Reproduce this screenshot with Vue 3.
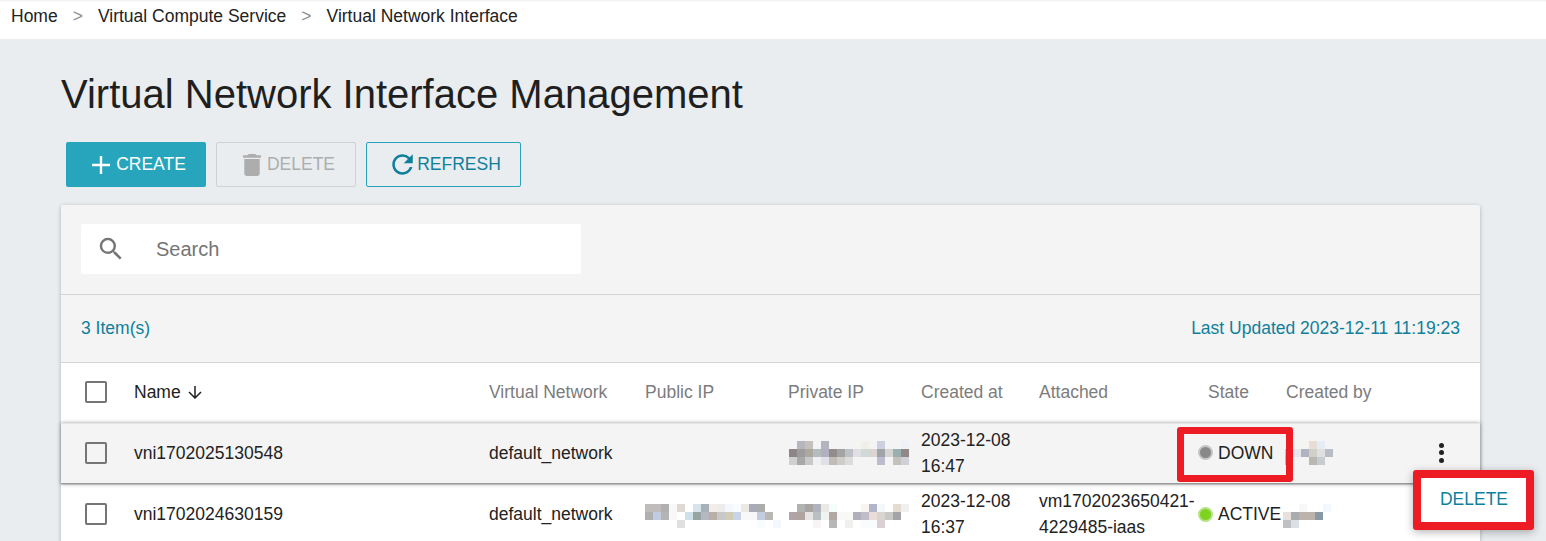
<script setup>
const headers = [
  { label: 'Virtual Network' },
  { label: 'Public IP' },
  { label: 'Private IP' },
  { label: 'Created at' },
  { label: 'Attached' },
  { label: 'State', cls: 'state-head' },
  { label: 'Created by' },
]
const blurs = {
  priv1: [
    '- b6b6be c4c0bc - b4b4c0 - - - - f2efe8 - ccd0e0 - - eef2f6',
    '8f8587 9c9c9c aca8a0 b4bcc0 b0b0c0 948c8c a4a4a4 c0c0c8 e0e0e4 d0d8d8 dcd4d0 a0a4a8 d4d4d0 9ab0b0 908888',
    'd0d0d0 a8a8a8 c8c8c8 eef0f2 e0e0e8 c0bcb8 d0ccc8 dcdcdc - - - bcbccc - c4c0bc d0d0d8',
  ],
  pub2: [
    'c0bcbc c0bcbc b0b0b0 f8f8f8 e0d8d4 - d8e4ec a8b0b8 f4ece8 ececec f4f8fc f8fcfc ece8e4 a8acb8 acaca8 - -',
    'b0b0b0 c0cce0 b4b4b4 f8f8f8 - d0e0e8 98a4a0 b4b8c0 b8b0a8 c8c8c8 d0ccb8 c8d4e8 f8f8f8 f8f8f8 c4cce0 b8b8b4 -',
    '- - - - e0e0e0 - - - - - - - - - f8fcfc - f4f8fc',
  ],
  priv2: [
    '- b0b4b0 a8a4a0 b0b4bc ece8e4 f4fcfc - - - f8f4f0 b4b4c8 f4f8fc - e4dcd0 f0f0f0',
    'b0a4a8 b0a4a0 e8e4e4 b8c0c4 f0f4f0 b0a8a4 f8f8f8 f8f8f4 b0b0bc c0bcc8 eadcd8 d8d4d0 c8c8c4 a4a4a8 -',
    '- - - f8f4f4 - b8b8b8 - f0f0ec - f8fcfc f8fcfc d8d0d4 - - -',
  ],
  user1: [
    '- - - e8dcd8 e4ecf4 -',
    'c0c0c8 e8e8ec b0b4c0 d0d0c8 e0e0e0 b8bcc4',
    'b8b8bc - - b8b8b0 c8ccd0 -',
  ],
  user2: [
    '- - f8f8f8 - - f4f8fc',
    'e8e0dc a8acac bcb4ac bcb4ac 8898a4 -',
    'c0c0c4 dce0e4 - - - -',
  ],
}
const cells = (key) =>
  blurs[key].map((r) => r.split(' ').map((c) => (c === '-' ? 'transparent' : '#' + c)))
const rows = [
  { name: 'vni1702025130548', net: 'default_network', pub: null, priv: 'priv1', date: '2023-12-08', time: '16:47', attached: [], state: 'DOWN', user: 'user1', hover: true },
  { name: 'vni1702024630159', net: 'default_network', pub: 'pub2', priv: 'priv2', date: '2023-12-08', time: '16:37', attached: ['vm1702023650421-', '4229485-iaas'], state: 'ACTIVE', user: 'user2', hover: false },
]
</script>

<template>
  <div class="page">
    <nav class="crumbs">
      <span>Home</span><span class="sep">&gt;</span>
      <span>Virtual Compute Service</span><span class="sep">&gt;</span>
      <span>Virtual Network Interface</span>
    </nav>
    <main class="content">
      <h1 class="title">Virtual Network Interface Management</h1>
      <div class="actions">
        <button class="btn primary">
          <svg class="ic-plus" width="18" height="18" viewBox="0 0 18 18"><path d="M9 0v18M0 9h18" stroke="#fff" stroke-width="2.400" fill="none"/></svg>
          CREATE
        </button>
        <button class="btn disabled">
          <svg class="ic-trash" width="18" height="22" viewBox="5 3 14 18" preserveAspectRatio="none"><path fill="#adadad" d="M6 19c0 1.100.9 2 2 2h8c1.100 0 2-.9 2-2V7H6v12zM19 4h-3.500l-1-1h-5l-1 1H5v2h14V4z"/></svg>
          DELETE
        </button>
        <button class="btn outline">
          <svg class="ic-refresh" width="21" height="21" viewBox="3.800 3.800 16.400 16.400"><path fill="#0f7f9c" d="M17.650 6.350A7.958 7.958 0 0 0 12 4c-4.420 0-7.990 3.580-7.990 8s3.570 8 7.990 8c3.730 0 6.840-2.550 7.730-6h-2.080A5.990 5.990 0 0 1 12 18c-3.310 0-6-2.690-6-6s2.690-6 6-6c1.660 0 3.140.69 4.220 1.780L13 11h7V4l-2.350 2.350z"/></svg>
          REFRESH
        </button>
      </div>
      <section class="card">
        <div class="search-bar">
          <div class="search">
            <svg class="search-icon" width="30" height="30" viewBox="0 0 24 24"><path fill="#757575" d="M15.500 14h-.79l-.28-.27A6.471 6.471 0 0 0 16 9.500 6.500 6.500 0 1 0 9.500 16c1.610 0 3.090-.59 4.230-1.570l.27.28v.79l5 4.990L20.490 19l-4.990-5zm-6 0C7.010 14 5 11.990 5 9.500S7.010 5 9.500 5 14 7.010 14 9.500 11.990 14 9.500 14z"/></svg>
            <span class="placeholder">Search</span>
          </div>
        </div>
        <div class="summary">
          <span>3 Item(s)</span>
          <span>Last Updated 2023-12-11 11:19:23</span>
        </div>
        <div class="row head">
          <div class="check-cell"><span class="check"></span></div>
          <div class="name-head">Name
            <svg width="14" height="13" viewBox="0 0 14 13"><path d="M7 0v12M1 6l6 6 6-6" stroke="#222" stroke-width="1.500" fill="none"/></svg>
          </div>
          <div v-for="h in headers" :key="h.label" :class="['head-cell', h.cls]">{{ h.label }}</div>
          <div></div>
        </div>
        <div v-for="r in rows" :key="r.name" :class="['row', 'body-row', { hovered: r.hover }]">
          <div class="check-cell"><span class="check"></span></div>
          <div>{{ r.name }}</div>
          <div>{{ r.net }}</div>
          <div>
            <div v-if="r.pub" class="blur">
              <div v-for="(line, i) in cells(r.pub)" :key="i" class="blur-line">
                <i v-for="(c, j) in line" :key="j" :style="{ background: c }"></i>
              </div>
            </div>
          </div>
          <div>
            <div class="blur priv">
              <div v-for="(line, i) in cells(r.priv)" :key="i" class="blur-line">
                <i v-for="(c, j) in line" :key="j" :style="{ background: c }"></i>
              </div>
            </div>
          </div>
          <div class="two-line"><div>{{ r.date }}</div><div>{{ r.time }}</div></div>
          <div class="two-line"><div v-for="a in r.attached" :key="a">{{ a }}</div></div>
          <div class="state-cell">
            <span :class="['dot', r.state === 'DOWN' ? 'down' : 'active']"></span>{{ r.state }}
          </div>
          <div>
            <div :class="['blur', r.hover ? 'user-a' : 'user-b']">
              <div v-for="(line, i) in cells(r.user)" :key="i" class="blur-line">
                <i v-for="(c, j) in line" :key="j" :style="{ background: c }"></i>
              </div>
            </div>
          </div>
          <div class="more-cell">
            <span class="more"><b></b><b></b><b></b></span>
          </div>
          <template v-if="r.hover">
            <div class="mark"></div>
            <div class="menu">DELETE</div>
          </template>
        </div>
      </section>
    </main>
  </div>
</template>

<style>
html, body { margin: 0; height: 100%; overflow: hidden; }
</style>

<style scoped>
.page {
  height: 541px;
  overflow: hidden;
  background: #e9edf0;
  font-family: "Liberation Sans", Arial, sans-serif;
  font-size: 17.5px;
  color: #222;
}
.crumbs {
  height: 39px;
  background: #fff;
  box-shadow: inset 0 2px 2px -1px #eee;
  display: flex;
  align-items: center;
  padding: 0 11px 7px;
  box-sizing: border-box;
}
.sep { color: #8d8d8d; margin: 0 15px; }
.content { padding: 0 66px 0 61px; }
.title {
  margin: 0;
  padding: 30px 0 23px;
  height: 50px;
  font-size: 40px;
  line-height: 50px;
  font-weight: 400;
  color: #1f1f1f;
}
.actions { display: flex; gap: 10px; padding-left: 5px; height: 45px; margin-bottom: 18px; }
.btn {
  box-sizing: border-box;
  height: 45px;
  border-radius: 2px;
  font: inherit;
  display: flex;
  align-items: center;
  justify-content: center;
  padding: 0 0 0 6px;
}
.ic-plus { margin-right: 6px; }
.ic-trash { margin-right: 6px; }
.ic-refresh { margin-right: 4px; }
.primary { width: 140px; background: #26a5bd; border: 0; color: #fff; }
.disabled { width: 140px; background: transparent; border: 1px solid #cfd2d4; color: #adadad; }
.outline { width: 155px; background: transparent; border: 1px solid #26a5bd; color: #0f7f9c; }
.card { background: #f4f4f4; box-shadow: 0 1px 4px rgba(0,0,0,.25); border-radius: 2px 2px 0 0; }
.search-bar { padding: 19px 20px 20px; border-bottom: 1px solid #d4d4d4; }
.search {
  width: 500px;
  height: 50px;
  background: #fff;
  border-radius: 2px;
  display: flex;
  align-items: center;
  padding-left: 15px;
  box-sizing: border-box;
}
.search-icon { margin-right: 30px; }
.placeholder { font-size: 20px; color: #757575; }
.summary {
  height: 67px;
  padding: 0 20px;
  display: flex;
  justify-content: space-between;
  align-items: center;
  color: #0f7f9c;
  border-bottom: 1px solid #d4d4d4;
}
.row {
  position: relative;
  display: grid;
  grid-template-columns: 73px 355px 156px 143px 133px 118px 159px 88px 134px 1fr;
  align-items: center;
  background: #fff;
  line-height: 28px;
}
.head { height: 60px; padding-bottom: 2px; box-sizing: border-box; color: #7c7c7c; }
.name-head { color: #222; display: flex; align-items: center; gap: 7px; }
.head-cell { color: #7c7c7c; }
.state-head { padding-left: 10px; }
.body-row { height: 61px; padding-bottom: 2px; border-top: 1px solid #e2e2e2; box-sizing: border-box; }
.hovered {
  background: #f4f4f4;
  box-shadow: 0 0 4px rgba(0,0,0,.4);
  z-index: 1;
  border-bottom: 1px solid #999;
  border-top-color: #e6e6e6;
}
.check-cell { display: flex; padding-left: 24px; }
.check {
  width: 22px;
  height: 22px;
  box-sizing: border-box;
  border: 2px solid #757575;
  border-radius: 2px;
  background: #fff;
}
.hovered .check { background: #f4f4f4; }
.two-line { line-height: 26px; white-space: nowrap; }
.blur { width: max-content; }
.body-row:not(.hovered) .blur { margin-top: 3px; }
.priv { margin-left: 1px; }
.user-a { margin-left: -1px; }
.user-b { margin-left: -3px; }
.blur-line { display: flex; height: 8px; }
.blur-line i { display: block; width: 8px; height: 8px; }
.state-cell { display: flex; align-items: center; gap: 5px; white-space: nowrap; }
.dot { width: 11px; height: 11px; border-radius: 50%; border: 2px solid; }
.dot.down { background: #888; border-color: #c4c4c4; }
.dot.active { background: #7ed321; border-color: #b5e384; }
.more-cell { display: flex; justify-content: flex-end; padding-right: 36px; }
.more { display: flex; flex-direction: column; gap: 2.500px; }
.more b { width: 5px; height: 5px; border-radius: 50%; background: #222; display: block; }
.mark {
  position: absolute;
  left: 1116px;
  top: 3px;
  width: 116px;
  height: 55px;
  box-sizing: border-box;
  border: 7px solid #ed1c24;
  border-radius: 3px;
}
.menu {
  position: absolute;
  left: 1352px;
  top: 46px;
  width: 121px;
  height: 60px;
  box-sizing: border-box;
  border: 8px solid #ed1c24;
  border-radius: 3px;
  padding: 0 0 3px 1px;
  background: #fff;
  color: #0f7f9c;
  display: flex;
  align-items: center;
  justify-content: center;
  box-shadow: 0 2px 8px rgba(0,0,0,.3);
  z-index: 2;
}
</style>
